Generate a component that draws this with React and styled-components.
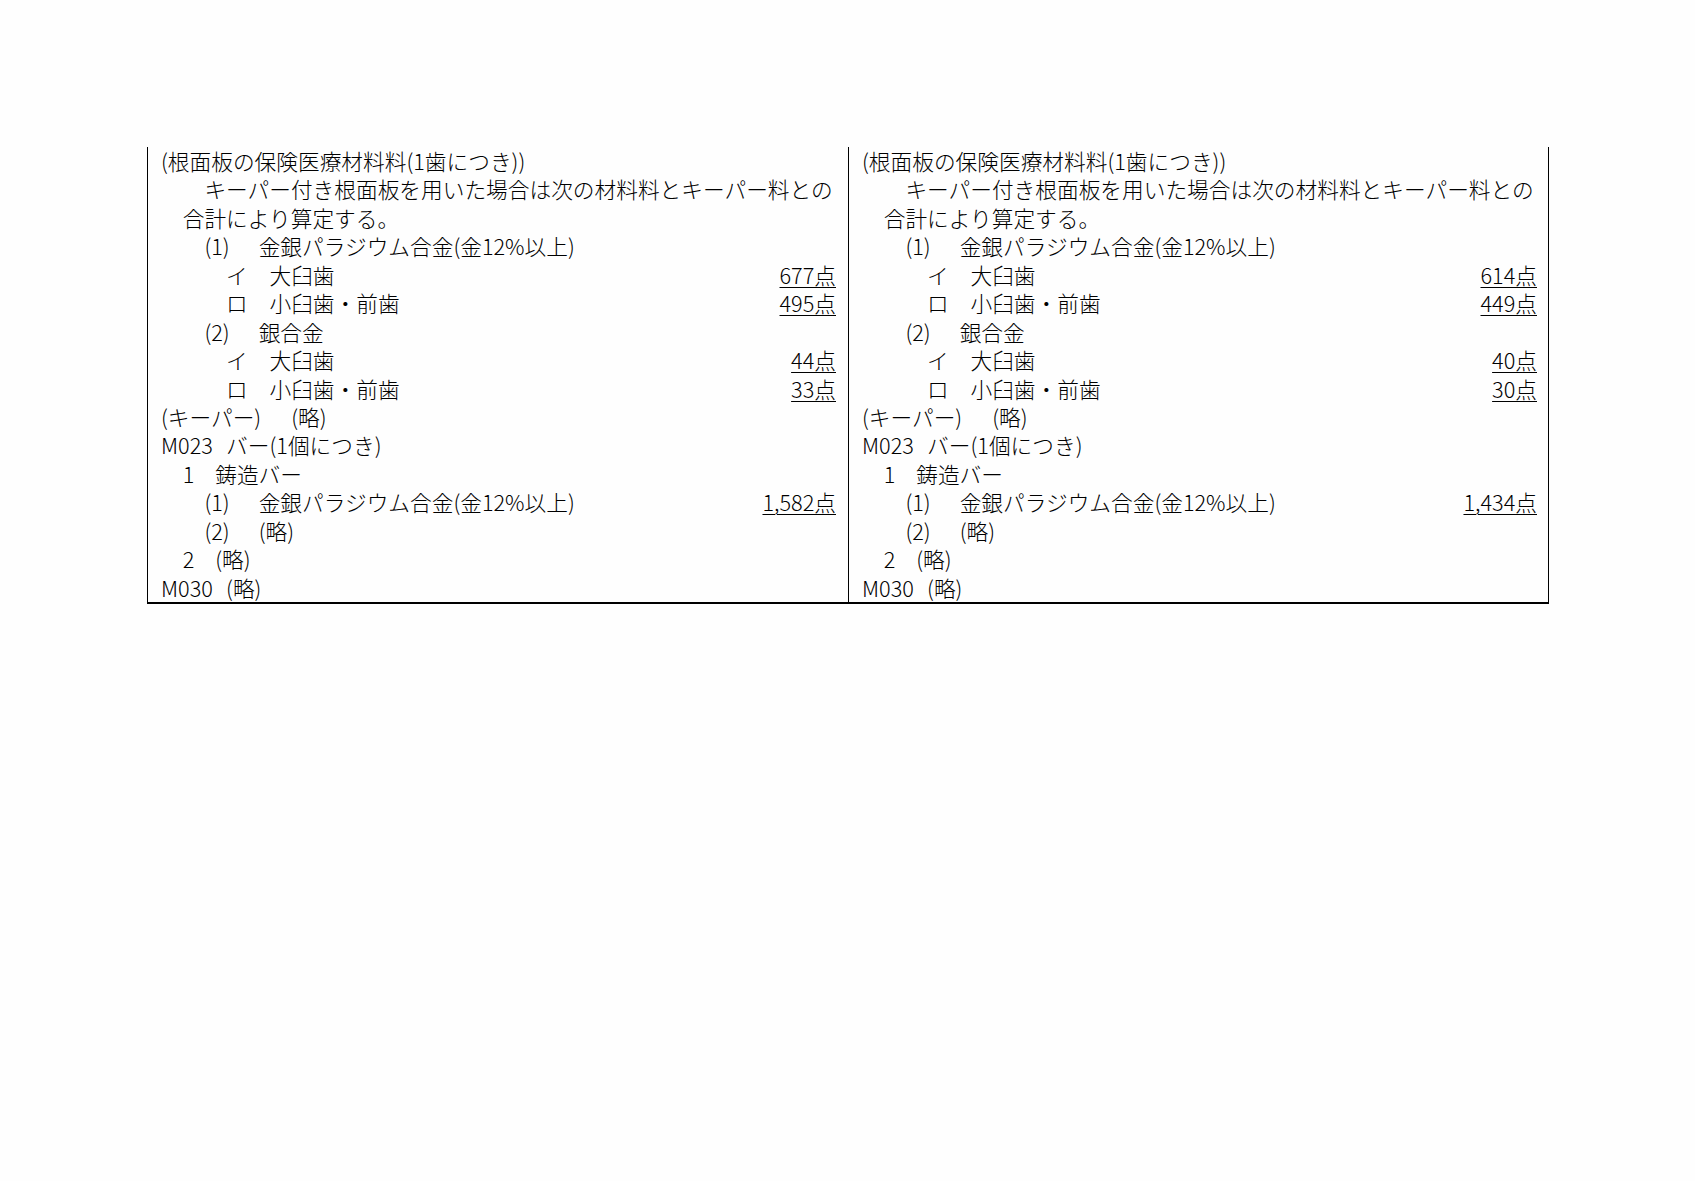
import React from "react";
import styled, { createGlobalStyle } from "styled-components";

const GlobalStyle = createGlobalStyle`
  html, body {
    margin: 0;
    padding: 0;
    background: #fefefe;
  }
  body {
    font-family: "Noto Sans CJK JP", "Noto Sans", sans-serif;
    color: #000;
  }
`;

const columns = [
  { amounts: ["677点", "495点", "44点", "33点", "1,582点"] },
  { amounts: ["614点", "449点", "40点", "30点", "1,434点"] },
];

const buildRows = (a) => [
  { indent: 0, text: "(根面板の保険医療材料料(1歯につき))" },
  { indent: 2, text: "キーパー付き根面板を用いた場合は次の材料料とキーパー料との" },
  { indent: 1, text: "合計により算定する。" },
  { indent: 2, mark: "(1)", markWidth: 2.5, text: "金銀パラジウム合金(金12%以上)" },
  { indent: 3, mark: "イ", markWidth: 2, text: "大臼歯", amount: a[0] },
  { indent: 3, mark: "ロ", markWidth: 2, text: "小臼歯・前歯", amount: a[1] },
  { indent: 2, mark: "(2)", markWidth: 2.5, text: "銀合金" },
  { indent: 3, mark: "イ", markWidth: 2, text: "大臼歯", amount: a[2] },
  { indent: 3, mark: "ロ", markWidth: 2, text: "小臼歯・前歯", amount: a[3] },
  { indent: 0, mark: "(キーパー)", markWidth: 6, text: "(略)" },
  { indent: 0, mark: "M023", markWidth: 3, text: "バー(1個につき)" },
  { indent: 1, mark: "1", markWidth: 1.5, text: "鋳造バー" },
  { indent: 2, mark: "(1)", markWidth: 2.5, text: "金銀パラジウム合金(金12%以上)", amount: a[4] },
  { indent: 2, mark: "(2)", markWidth: 2.5, text: "(略)" },
  { indent: 1, mark: "2", markWidth: 1.5, text: "(略)" },
  { indent: 0, mark: "M030", markWidth: 3, text: "(略)" },
];

const Page = styled.div`
  padding: 147px 0 0 147px;
  min-height: 1181px;
  box-sizing: border-box;
`;

const Table = styled.div`
  display: grid;
  grid-template-columns: 701px 701px;
  width: 1402px;
  border-bottom: 2px solid #000;
`;

const Column = styled.div`
  box-sizing: border-box;
  border-left: 1px solid #000;
  border-right: ${(p) => (p.last ? "1px solid #000" : "none")};
  padding: 0 ${(p) => (p.last ? 11 : 12)}px 0 13px;
  font-size: 21.7px;
  font-weight: 300;
`;

const Row = styled.div`
  display: flex;
  align-items: baseline;
  height: 28.45px;
  line-height: 28.45px;
  padding-left: ${(p) => p.indent}em;
  white-space: nowrap;
`;

const Mark = styled.span`
  display: inline-block;
  width: ${(p) => p.w}em;
  flex: none;
`;

const Amount = styled.span`
  margin-left: auto;
  text-decoration: underline;
  text-decoration-thickness: 1px;
  text-underline-offset: 3px;
`;

export default function App() {
  return (
    <Page>
      <GlobalStyle />
      <Table>
        {columns.map((col, ci) => (
          <Column key={ci} last={ci === columns.length - 1}>
            {buildRows(col.amounts).map((r, i) => (
              <Row key={i} indent={r.indent}>
                {r.mark && <Mark w={r.markWidth}>{r.mark}</Mark>}
                <span>{r.text}</span>
                {r.amount && <Amount>{r.amount}</Amount>}
              </Row>
            ))}
          </Column>
        ))}
      </Table>
    </Page>
  );
}
